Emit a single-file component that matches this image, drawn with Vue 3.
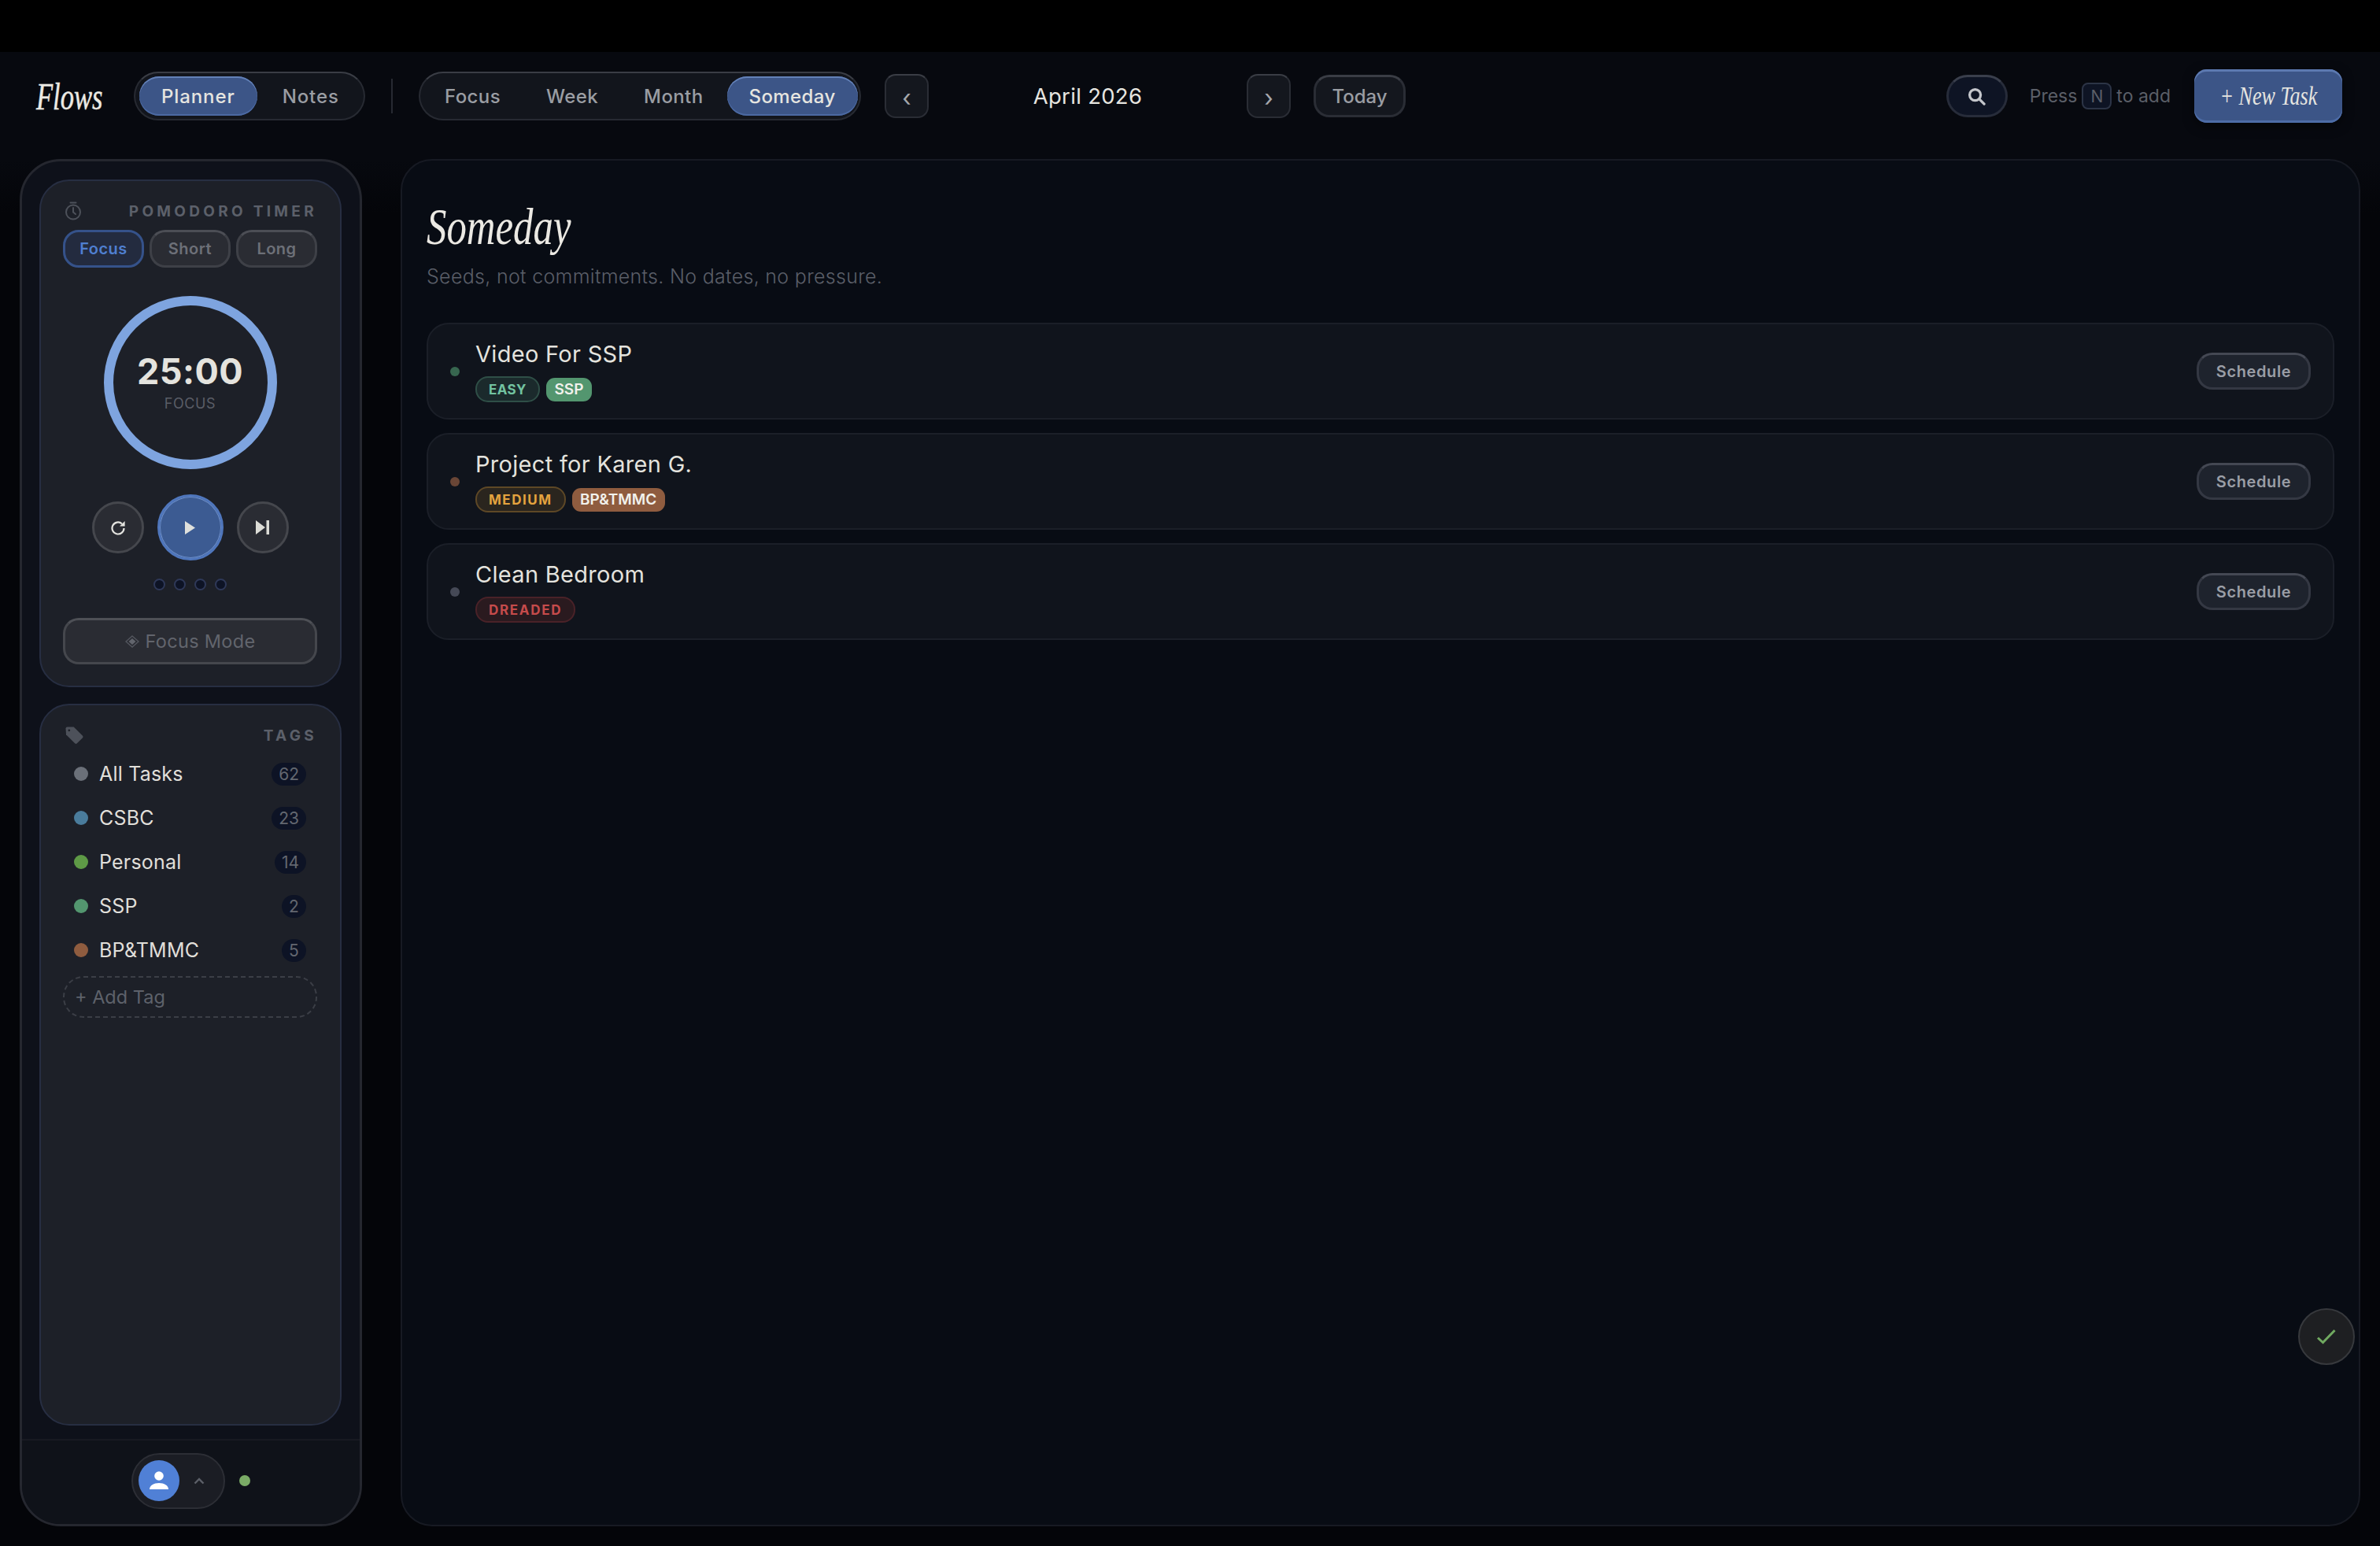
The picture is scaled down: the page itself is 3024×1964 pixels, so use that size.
<template>
  <div class="app">
    <div class="topband"></div>

    <header class="header">
      <div class="logo"><span>Flows</span></div>

      <div class="seg seg-mode">
        <button v-for="m in modes" :key="m" class="seg-item" :class="{ active: m === 'Planner' }">{{ m }}</button>
      </div>

      <div class="divider"></div>

      <div class="seg seg-views">
        <button v-for="v in views" :key="v" class="seg-item" :class="{ active: v === 'Someday' }">{{ v }}</button>
      </div>

      <button class="nav-btn prev">‹</button>
      <div class="month">April 2026</div>
      <button class="nav-btn">›</button>
      <button class="today">Today</button>

      <div class="header-right">
        <button class="search">
          <svg width="23" height="23" viewBox="0 0 24 24" fill="none" stroke="#c4c6cb" stroke-width="3.4" stroke-linecap="round">
            <circle cx="10" cy="10" r="7.300" />
            <path d="M15.500 15.500 22 22" />
          </svg>
        </button>
        <div class="hint">Press <kbd>N</kbd> to add</div>
        <button class="new-task"><span>+ New Task</span></button>
      </div>
    </header>

    <div class="body">
      <aside class="sidebar">
        <div class="side-scroll">
          <section class="card pomo">
            <div class="card-head">
              <svg class="timer-ico" width="22" height="24" viewBox="0 0 22 24" fill="none" stroke="#4d515a" stroke-width="2" stroke-linecap="round">
                <circle cx="11" cy="13.500" r="9" />
                <path d="M7.500 1.500h7M11 8v5.500l3 2.500" />
              </svg>
              <span class="card-title">POMODORO TIMER</span>
            </div>

            <div class="modes">
              <button v-for="p in presets" :key="p" class="preset" :class="{ on: p === 'Focus' }">{{ p }}</button>
            </div>

            <div class="ring">
              <div class="time">25:00</div>
              <div class="ring-label">FOCUS</div>
            </div>

            <div class="controls">
              <button class="ctl">
                <svg width="20" height="20" viewBox="0 0 20 20" fill="none" stroke="#e4e4e0" stroke-width="2.200">
                  <path d="M17.500 11a7.500 7.500 0 1 1-2.600-5.700" />
                  <path d="M18.600 2v6.600h-6.600z" fill="#e4e4e0" stroke="none" />
                </svg>
              </button>
              <button class="ctl play">
                <svg width="13" height="17" viewBox="0 0 13 17"><path d="M0 0 13 8.500 0 17z" fill="#dfe0dc" /></svg>
              </button>
              <button class="ctl">
                <svg width="17" height="18" viewBox="0 0 17 18" fill="#dcdcd6">
                  <path d="M0 0 12 9 0 18z" />
                  <rect x="13.500" y="0" width="3.500" height="18" />
                </svg>
              </button>
            </div>

            <div class="dots">
              <span v-for="n in 4" :key="n" class="dot"></span>
            </div>

            <button class="focus-mode">
              <svg width="18" height="16" viewBox="0 0 18 16" fill="none">
                <path d="M9 1 17 8 9 15 1 8z" stroke="#53565e" stroke-width="1.400" />
                <path d="M9 4 13.500 8 9 12 4.500 8z" fill="#62656d" />
              </svg>
              Focus Mode
            </button>
          </section>

          <section class="card tags">
            <div class="card-head tags-head">
              <svg width="24" height="24" viewBox="0 0 24 24" fill="#4d515a">
                <path d="M1.500 3.500A2 2 0 0 1 3.500 1.500h8.200L22.800 12.600a2 2 0 0 1 0 2.800l-6.900 6.900a2 2 0 0 1-2.800 0L2 11.200z" />
                <circle cx="5.800" cy="5.800" r="1.400" fill="#1d2028" />
              </svg>
              <span class="card-title">TAGS</span>
            </div>

            <div class="tag-list">
              <div v-for="t in tags" :key="t.name" class="tag-row">
                <span class="tag-dot" :style="{ background: t.color }"></span>
                <span class="tag-name">{{ t.name }}</span>
                <span class="tag-count">{{ t.count }}</span>
              </div>
            </div>

            <button class="add-tag">+ Add Tag</button>
          </section>
        </div>

        <div class="side-foot">
          <div class="user">
            <div class="avatar">
              <svg width="26" height="26" viewBox="0 0 26 26" fill="#fff">
                <circle cx="13" cy="7" r="5.800" />
                <path d="M1 24c0-5 5.400-8 12-8s12 3 12 8z" />
              </svg>
            </div>
            <svg class="chev" width="14" height="9" viewBox="0 0 14 9" fill="none" stroke="#5c5f68" stroke-width="2.400">
              <path d="M1.500 7.500 7 2l5.500 5.500" />
            </svg>
          </div>
          <span class="status"></span>
        </div>
      </aside>

      <main class="main">
        <h1 class="title"><span>Someday</span></h1>
        <p class="sub">Seeds, not commitments. No dates, no pressure.</p>

        <div class="task-list">
          <div v-for="t in tasks" :key="t.title" class="task">
            <span class="task-dot" :style="{ background: t.dot }"></span>
            <div class="task-info">
              <div class="task-title">{{ t.title }}</div>
              <div class="chips">
                <span class="chip" :class="t.level">{{ t.level.toUpperCase() }}</span>
                <span v-if="t.tag" class="tag-chip" :style="{ background: t.tagColor }">{{ t.tag }}</span>
              </div>
            </div>
            <button class="schedule">Schedule</button>
          </div>
        </div>

        <button class="fab">
          <svg width="26" height="22" viewBox="0 0 26 22" fill="none" stroke="#70a960" stroke-width="3">
            <path d="M2 12.500 8.500 18.500 23.500 3" />
          </svg>
        </button>
      </main>
    </div>
  </div>
</template>

<script setup>
const modes = ['Planner', 'Notes']
const views = ['Focus', 'Week', 'Month', 'Someday']
const presets = ['Focus', 'Short', 'Long']

const tags = [
  { name: 'All Tasks', count: 62, color: '#6b7079' },
  { name: 'CSBC',      count: 23, color: '#4a7c9c' },
  { name: 'Personal',  count: 14, color: '#5e9a46' },
  { name: 'SSP',       count: 2,  color: '#53966f' },
  { name: 'BP&TMMC',   count: 5,  color: '#8f5c3f' },
]

const tasks = [
  { title: 'Video For SSP',      level: 'easy',    tag: 'SSP',     tagColor: '#53966f', dot: '#37664f' },
  { title: 'Project for Karen G.', level: 'medium',  tag: 'BP&TMMC', tagColor: '#8f5c3f', dot: '#6a4636' },
  { title: 'Clean Bedroom',      level: 'dreaded', dot: '#454956' },
]
</script>

<style>
html, body { margin: 0; background: #040509; }
</style>

<style scoped>
* { box-sizing: border-box; }
button { font: inherit; cursor: pointer; }

.app {
  width: 3024px;
  height: 1964px;
  display: flex;
  flex-direction: column;
  background: #040509;
  color: #e6e5e0;
  font-family: Inter, "Liberation Sans", sans-serif;
  overflow: hidden;
}
.topband { height: 66px; background: #000; flex: none; }

/* Header */
.header {
  height: 136px;
  flex: none;
  display: flex;
  align-items: center;
  padding: 0 48px 24px 46px;
  background: #07090f;
}
.logo {
  width: 84px;
  font-family: "Liberation Serif", serif;
  font-style: italic;
  font-size: 48px;
  color: #eceae4;
  margin-right: 40px;
  white-space: nowrap;
  -webkit-text-stroke: 0.5px #eceae4;
}
.logo span { display: inline-block; transform: scaleX(0.72); transform-origin: left center; }

.seg {
  height: 62px;
  display: flex;
  align-items: center;
  gap: 2px;
  padding: 0 3px;
  background: #12151c;
  border: 2px solid #272a32;
  border-top-color: #3a3d45;
  border-radius: 31px;
}
.seg-item {
  height: 50px;
  padding: 0 28px;
  background: none;
  border: none;
  border-radius: 25px;
  color: #9a9da3;
  font-size: 24px;
  font-weight: 500;
  letter-spacing: 0.4px;
}
.seg-item.active {
  background: #3c5587;
  color: #e6e5e0;
  box-shadow: inset 0 2px 0 #6381b8, inset 0 -2px 0 #4c6aa3;
}
.seg-mode { width: 294px; gap: 4px; padding: 0 5px; }
.seg-mode .seg-item { letter-spacing: 0.9px; }
.seg-views { width: 562px; }
.divider { width: 2px; height: 44px; background: #272a32; margin: 0 33px 0 33px; }

.nav-btn {
  width: 56px;
  height: 56px;
  margin-left: 30px;
  padding: 4px 0 0;
  background: #14171e;
  border: 2px solid #2a2d35;
  border-top-color: #3a3d45;
  border-radius: 14px;
  color: #a5a7ac;
  font-size: 30px;
  line-height: 1;
}
.nav-btn.prev + .month { margin-right: -30px; }
.month {
  width: 404px;
  text-align: center;
  font-size: 27.500px;
  font-weight: 400;
  color: #e6e5e0;
  letter-spacing: 0.3px;
}
.today {
  width: 117px;
  height: 54px;
  margin-left: 29px;
  background: #14171e;
  border: 3px solid #2a2d35;
  border-top-color: #3a3d45;
  border-radius: 20px;
  color: #9a9da3;
  font-size: 24px;
  font-weight: 500;
}

.header-right {
  margin-left: auto;
  display: flex;
  align-items: center;
}
.search {
  width: 78px;
  height: 54px;
  display: flex;
  align-items: center;
  justify-content: center;
  background: #0e1424;
  border: 3px solid #272c3a;
  border-top-color: #3a3f4c;
  border-radius: 27px;
}
.hint {
  display: flex;
  align-items: center;
  gap: 6px;
  margin: 0 30px 0 28px;
  font-size: 23px;
  color: #5b5f68;
  white-space: nowrap;
}
.hint kbd {
  width: 38px;
  height: 34px;
  display: flex;
  align-items: center;
  justify-content: center;
  font: inherit;
  font-size: 21px;
  background: #0e1424;
  border: 2px solid #2c3446;
  border-radius: 8px;
}
.new-task {
  width: 188px;
  height: 68px;
  background: #3c5587;
  border: none;
  border-radius: 16px;
  box-shadow: inset 0 3px 0 #5c79b0, inset 0 -3px 0 #4d6ca6, 0 4px 14px rgba(0, 0, 0, 0.5);
  color: #e6e5e0;
  font-family: "Liberation Serif", serif;
  font-style: italic;
  font-size: 33px;
  white-space: nowrap;
}
.new-task span { display: inline-block; transform: scaleX(0.79); }

/* Body columns */
.body {
  flex: 1;
  display: flex;
  gap: 49px;
  padding: 0 25px 25px;
  min-height: 0;
  background: linear-gradient(180deg, #07090f 0, #040509 70px);
}

/* Sidebar */
.sidebar {
  width: 435px;
  flex: none;
  display: flex;
  flex-direction: column;
  background: #0e111a;
  border: 3px solid #25272f;
  border-radius: 52px;
  overflow: hidden;
}
.side-scroll {
  flex: 1;
  display: flex;
  flex-direction: column;
  gap: 21px;
  padding: 23px 23px 17px 22px;
  min-height: 0;
}
.card {
  background: #1d2028;
  border: 2px solid #272e42;
  border-radius: 38px;
  padding: 0 29px 0 28px;
}
.pomo { height: 645px; flex: none; }
.tags { flex: 1; }
.card-head {
  display: flex;
  align-items: center;
  justify-content: space-between;
  height: 24px;
  margin-top: 26px;
  padding: 0 0 0 2px;
}
.card-title {
  font-size: 19px;
  font-weight: 700;
  letter-spacing: 4.300px;
  color: #5c606a;
}

.modes {
  display: flex;
  gap: 7px;
  margin-top: 12px;
}
.preset {
  flex: 1;
  height: 48px;
  background: #2a2c33;
  border: 3px solid #3e4047;
  border-top-color: #4c4e55;
  border-radius: 20px;
  color: #6d7078;
  font-size: 20px;
  font-weight: 600;
  letter-spacing: 0.5px;
}
.preset.on {
  background: #232b3f;
  border-color: #35528a;
  color: #4f7fd0;
}

.ring {
  width: 220px;
  height: 220px;
  margin: 36px auto 0;
  border: 12px solid #7ea4df;
  border-radius: 50%;
  display: flex;
  flex-direction: column;
  align-items: center;
  padding-top: 54px;
}
.time {
  font-size: 45px;
  font-weight: 700;
  line-height: 60px;
  letter-spacing: 0.400px;
  color: #e4e3de;
}
.ring-label {
  font-size: 18px;
  line-height: 22px;
  letter-spacing: 0.6px;
  color: #5a5d66;
}

.controls {
  display: flex;
  align-items: center;
  justify-content: center;
  gap: 17px;
  margin-top: 32px;
}
.ctl {
  width: 66px;
  height: 66px;
  display: flex;
  align-items: center;
  justify-content: center;
  background: #2a2c33;
  border: 3px solid #45474d;
  border-radius: 50%;
}
.ctl.play {
  width: 84px;
  height: 84px;
  background: #3c5b92;
  border-color: #4f76bc;
  box-shadow: inset 0 0 0 1px #6e8fc8;
}
.dots {
  display: flex;
  justify-content: center;
  gap: 11px;
  margin-top: 23px;
}
.dot {
  width: 15px;
  height: 15px;
  border-radius: 50%;
  background: #0d1325;
  border: 2px solid #2e3858;
}
.focus-mode {
  width: 100%;
  height: 59px;
  margin-top: 35px;
  display: flex;
  align-items: center;
  justify-content: center;
  gap: 8px;
  background: #2a2c33;
  border: 3px solid #45474d;
  border-top-color: #4e5056;
  border-radius: 20px;
  color: #62656d;
  font-size: 23.500px;
  letter-spacing: 0.300px;
}

.tags-head { height: 24px; }
.tag-list { margin-top: 9px; }
.tag-row {
  height: 56px;
  display: flex;
  align-items: center;
  padding: 0 14px 0 14px;
}
.tag-dot { width: 18px; height: 18px; border-radius: 50%; flex: none; }
.tag-name {
  flex: 1;
  margin-left: 14px;
  font-size: 25px;
  color: #e0dfda;
  letter-spacing: 0.2px;
}
.tag-count {
  height: 29px;
  min-width: 31px;
  padding: 0 9px;
  display: flex;
  align-items: center;
  justify-content: center;
  border-radius: 15px;
  background: #0d1325;
  color: #636770;
  font-size: 21px;
}
.add-tag {
  display: block;
  width: 100%;
  height: 53px;
  margin-top: 5px;
  padding-left: 13px;
  text-align: left;
  background: none;
  border: 2px dashed #3b3e46;
  border-radius: 26px;
  color: #5e626b;
  font-size: 23.500px;
}

.side-foot {
  height: 108px;
  flex: none;
  display: flex;
  align-items: center;
  justify-content: center;
  gap: 18px;
  padding: 0 0 4px 0;
  border-top: 2px solid #181a22;
  background: #0f1219;
}
.user {
  width: 119px;
  height: 71px;
  display: flex;
  align-items: center;
  gap: 18px;
  padding-left: 7px;
  background: #1b1d24;
  border: 2px solid #2c2e35;
  border-radius: 36px;
}
.avatar {
  width: 52px;
  height: 52px;
  display: flex;
  align-items: center;
  justify-content: center;
  border-radius: 50%;
  background: #5080d6;
}
.status { width: 14px; height: 14px; border-radius: 50%; background: #7aab66; }

/* Main */
.main {
  position: relative;
  flex: 1;
  padding: 0 31px;
  background: #080c14;
  border: 2px solid #171a23;
  border-radius: 40px;
}
.title {
  margin: 48px 0 0;
  font-family: "Liberation Serif", serif;
  font-style: italic;
  font-weight: 400;
  font-size: 66px;
  line-height: 72px;
  color: #ebe9e3;
}
.title span { display: inline-block; transform: scaleX(0.77); transform-origin: left center; }
.sub {
  margin: 11px 0 0;
  font-size: 25px;
  font-weight: 300;
  line-height: 32px;
  color: #5a5e68;
  letter-spacing: 0.300px;
}
.task-list {
  display: flex;
  flex-direction: column;
  gap: 17px;
  margin-top: 43px;
}
.task {
  height: 123px;
  display: flex;
  align-items: center;
  padding: 0 28px 0 28px;
  background: #10141c;
  border: 2px solid #1b1f28;
  border-radius: 28px;
}
.task-dot { width: 12px; height: 12px; border-radius: 50%; flex: none; }
.task-info { flex: 1; margin-left: 20px; }
.task-title {
  font-size: 29px;
  line-height: 36px;
  color: #e4e3de;
  letter-spacing: 0.3px;
}
.chips {
  display: flex;
  align-items: center;
  gap: 8px;
  margin-top: 10px;
}
.chip {
  height: 33px;
  padding: 0 15px;
  display: flex;
  align-items: center;
  border: 2px solid;
  border-radius: 16px;
  font-size: 17px;
  font-weight: 700;
}
.chip.easy { color: #72c3a1; background: #1b2a2c; border-color: #2f4f47; letter-spacing: 0.4px; }
.chip.medium { color: #e4a33e; background: #2a251e; border-color: #5e4826; letter-spacing: 1.500px; }
.chip.dreaded { color: #c64b4b; background: #2a1a1f; border-color: #4a2228; letter-spacing: 1.700px; }
.tag-chip {
  height: 30px;
  padding: 0 10.500px;
  display: flex;
  align-items: center;
  border-radius: 11px;
  color: #f1f1ec;
  font-size: 19px;
  font-weight: 600;
}
.schedule {
  width: 145px;
  height: 47px;
  background: #1e232d;
  border: 3px solid #343843;
  border-top-color: #444853;
  border-radius: 20px;
  color: #9a9ea6;
  font-size: 20px;
  font-weight: 600;
  letter-spacing: 0.6px;
}
.fab {
  position: absolute;
  right: 5px;
  top: 1458px;
  width: 72px;
  height: 72px;
  display: flex;
  align-items: center;
  justify-content: center;
  background: #1e1f22;
  border: 2px solid #37393d;
  border-radius: 50%;
}
</style>
